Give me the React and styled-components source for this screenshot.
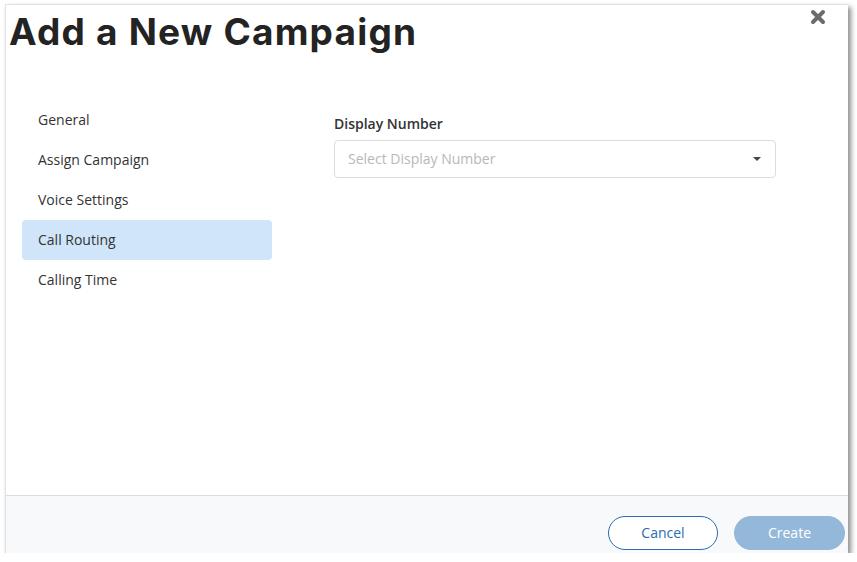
import React, { useState } from 'react'
import styled, { createGlobalStyle } from 'styled-components'

const Global = createGlobalStyle`
  html, body {
    margin: 0;
    padding: 0;
    background: #fff;
    font-family: "Open Sans", "Liberation Sans", sans-serif;
  }
`

const Dialog = styled.div`
  position: relative;
  margin: 4px 0 0 5px;
  width: 843px;
  height: 549px;
  background: #fff;
  border-top: 1px solid #e2e2e2;
  border-left: 1px solid #e2e2e2;
  box-sizing: border-box;
  box-shadow: 3px 3px 5px rgba(0, 0, 0, 0.45);
  display: flex;
  flex-direction: column;
`

const Header = styled.div`
  height: 69px;
  padding: 5px 0 0 3px;
  box-sizing: border-box;
`

const Title = styled.h1`
  margin: 0;
  font-family: Inter, "DejaVu Sans", sans-serif;
  font-weight: 700;
  font-size: 37px;
  line-height: 44px;
  color: #232323;
  letter-spacing: 1.2px;
`

const Close = styled.button`
  position: absolute;
  top: 2px;
  right: 21px;
  width: 19px;
  height: 19px;
  padding: 0;
  border: 0;
  background: none;
  cursor: pointer;
  display: flex;
  align-items: center;
  justify-content: center;
`

const Body = styled.div`
  flex: 1;
  display: flex;
  padding: 26px 0 0 16px;
  gap: 62px;
`

const Nav = styled.ul`
  list-style: none;
  margin: 0;
  padding: 0;
  width: 250px;
`

const NavItem = styled.li`
  height: 40px;
  box-sizing: border-box;
  display: flex;
  align-items: center;
  padding: 0 0 2px 16px;
  border-radius: 4px;
  font-size: 14px;
  color: #333;
  cursor: pointer;
  background: ${p => (p.$active ? '#d0e5fa' : 'transparent')};
`

const Content = styled.div`
  padding-top: 14px;
  width: 442px;
`

const Label = styled.div`
  font-size: 14px;
  font-weight: 600;
  color: #333;
  line-height: 20px;
  margin-bottom: 6px;
`

const Select = styled.div`
  height: 38px;
  box-sizing: border-box;
  border: 1px solid #dcdcdc;
  border-radius: 4px;
  display: flex;
  align-items: center;
  justify-content: space-between;
  padding: 0 14px 2px 13px;
  font-size: 14px;
  color: #b8b8b8;
`

const Caret = styled.span`
  width: 0;
  height: 0;
  border-left: 4px solid transparent;
  border-right: 4px solid transparent;
  border-top: 4px solid #444;
  margin-top: 2px;
`

const Footer = styled.div`
  height: 58px;
  box-sizing: border-box;
  border-top: 1px solid #dcdcdc;
  background: #f8f9fb;
  display: flex;
  justify-content: flex-end;
  align-items: flex-end;
  gap: 16px;
  padding: 0 3px 3px 0;
`

const Button = styled.button`
  width: ${p => p.$w}px;
  height: 34px;
  border-radius: 17px;
  padding: 0 0 2px;
  font-family: "Open Sans", "Liberation Sans", sans-serif;
  font-size: 14px;
  cursor: pointer;
  border: 1px solid ${p => (p.$primary ? '#94b8da' : '#2a6db0')};
  background: ${p => (p.$primary ? '#94b8da' : '#fff')};
  color: ${p => (p.$primary ? '#fff' : '#2a6db0')};
`

const items = ['General', 'Assign Campaign', 'Voice Settings', 'Call Routing', 'Calling Time']

export default function App() {
  const [active, setActive] = useState('Call Routing')
  return (
    <>
      <Global />
      <Dialog>
        <Header>
          <Title>Add a New Campaign</Title>
        </Header>
        <Close aria-label="close">
          <svg width="16" height="16" viewBox="0 0 16 16">
            <path d="M3 3 L13 13 M13 3 L3 13" stroke="#6b6b6b" strokeWidth="4" strokeLinecap="round" />
          </svg>
        </Close>
        <Body>
          <Nav>
            {items.map(it => (
              <NavItem key={it} $active={it === active} onClick={() => setActive(it)}>
                {it}
              </NavItem>
            ))}
          </Nav>
          <Content>
            <Label>Display Number</Label>
            <Select>
              Select Display Number
              <Caret />
            </Select>
          </Content>
        </Body>
        <Footer>
          <Button $w={110}>Cancel</Button>
          <Button $w={111} $primary>Create</Button>
        </Footer>
      </Dialog>
    </>
  )
}
